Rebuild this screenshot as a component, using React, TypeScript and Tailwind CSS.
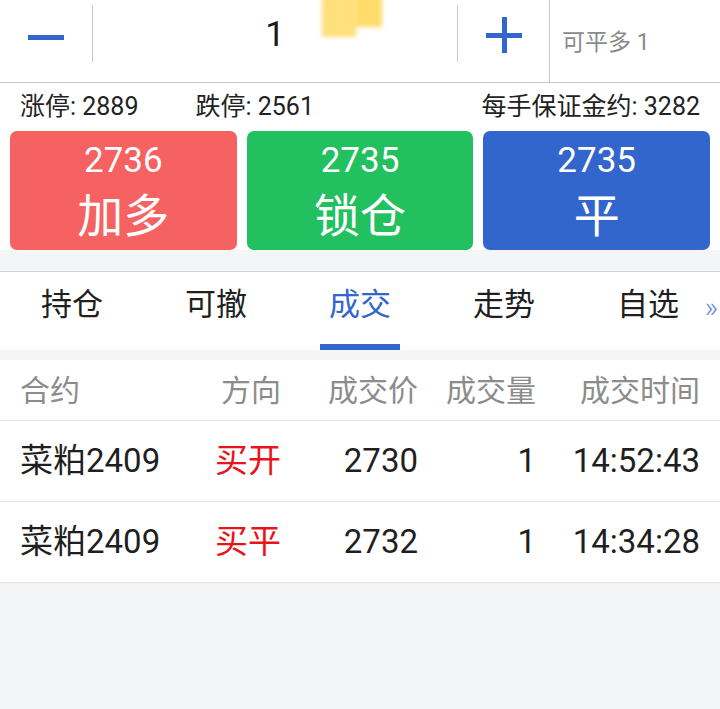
import React from 'react';

const FONT = "font-['Roboto','Noto_Sans_CJK_SC',sans-serif]";

interface Trade {
  contract: string;
  side: string;
  price: string;
  qty: string;
  time: string;
}

const trades: Trade[] = [
  { contract: '菜粕2409', side: '买开', price: '2730', qty: '1', time: '14:52:43' },
  { contract: '菜粕2409', side: '买平', price: '2732', qty: '1', time: '14:34:28' },
];

const tabs = ['持仓', '可撤', '成交', '走势', '自选'];

function ActionButton({ price, label, color }: { price: string; label: string; color: string }) {
  return (
    <div className={`${color} h-[119px] rounded-[7px] flex flex-col items-center text-white`}>
      <div className="text-[35px] leading-none mt-[12px]">{price}</div>
      <div className="text-[46px] leading-none mt-[15px]">{label}</div>
    </div>
  );
}

export default function App() {
  const [active, setActive] = React.useState(2);

  return (
    <div className={`${FONT} w-[720px] h-[709px] bg-[#f4f5f7] overflow-hidden`}>
      {/* 数量输入 */}
      <div className="relative h-[83px] bg-white border-b border-[#c9c9c9] flex">
        <div className="w-[92px] flex items-center justify-center">
          <div className="w-[36px] h-[5px] bg-[#3366cc] mt-[-7px]" />
        </div>
        <div className="w-px h-[57px] mt-[5px] bg-[#c9c9c9]" />
        <div className="w-[364px] flex items-center justify-center text-[35px] text-[#1a1a1a] pb-[12px]">1</div>
        <div className="w-px h-[57px] mt-[5px] bg-[#c9c9c9]" />
        <div className="w-[91px] flex items-center justify-center pb-[12px]">
          <div className="relative w-[36px] h-[36px]">
            <div className="absolute left-0 top-[16px] w-[36px] h-[5px] bg-[#3366cc]" />
            <div className="absolute top-0 left-[16px] w-[5px] h-[36px] bg-[#3366cc]" />
          </div>
        </div>
        <div className="w-px bg-[#c9c9c9]" />
        <div className="flex-1 flex items-center pl-[12px] pt-[4px] text-[23px] text-[#8a8a8a]">可平多 1</div>
        {/* 黄色遮挡 */}
        <div className="absolute left-[322px] top-[-4px] w-[34px] h-[41px] bg-[#ffe07a] blur-[2px]" />
        <div className="absolute left-[354px] top-[-4px] w-[28px] h-[31px] bg-[#ffdc6c] blur-[2px]" />
      </div>

      {/* 价格信息 */}
      <div className="h-[48px] bg-white flex items-center px-[20px] text-[25px] text-[#222]">
        <span>涨停: 2889</span>
        <span className="ml-[57px]">跌停: 2561</span>
        <span className="ml-auto">每手保证金约: 3282</span>
      </div>

      {/* 操作按钮 */}
      <div className="bg-white grid grid-cols-3 gap-[10px] px-[10px]">
        <ActionButton price="2736" label="加多" color="bg-[#f66161]" />
        <ActionButton price="2735" label="锁仓" color="bg-[#22c05f]" />
        <ActionButton price="2735" label="平" color="bg-[#3366cc]" />
      </div>

      <div className="h-[21px]" />

      {/* 标签页 */}
      <div className="relative h-[79px] bg-white border-t border-[#cfd0d8] grid grid-cols-5">
        {tabs.map((t, i) => (
          <button
            key={t}
            onClick={() => setActive(i)}
            className={`relative flex items-center justify-center text-[31px] pb-[12px] ${
              i === active ? 'text-[#3366cc]' : 'text-[#1f1f1f]'
            }`}
          >
            {t}
            {i === active && (
              <div className="absolute bottom-0 left-1/2 -translate-x-1/2 w-[80px] h-[6px] bg-[#3366cc]" />
            )}
          </button>
        ))}
        <div className="absolute right-[2px] top-[20px] text-[30px] font-light text-[#6b8fe0] leading-none">»</div>
      </div>

      <div className="h-[10px]" />

      {/* 成交列表 */}
      <div className="bg-white">
        <div className="h-[61px] border-b border-[#e3e3e6] grid grid-cols-[180px_81px_137px_118px_164px] px-[20px] items-center text-[30px] text-[#8c8c8c]">
          <div>合约</div>
          <div className="text-right">方向</div>
          <div className="text-right">成交价</div>
          <div className="text-right">成交量</div>
          <div className="text-right">成交时间</div>
        </div>
        {trades.map((r, i) => (
          <div
            key={i}
            className="h-[81px] border-b border-[#e3e3e6] grid grid-cols-[180px_81px_137px_118px_164px] px-[20px] items-center text-[33px] text-[#1f1f1f]"
          >
            <div>{r.contract}</div>
            <div className="text-right text-[#e8141b]">{r.side}</div>
            <div className="text-right">{r.price}</div>
            <div className="text-right">{r.qty}</div>
            <div className="text-right">{r.time}</div>
          </div>
        ))}
      </div>
    </div>
  );
}
